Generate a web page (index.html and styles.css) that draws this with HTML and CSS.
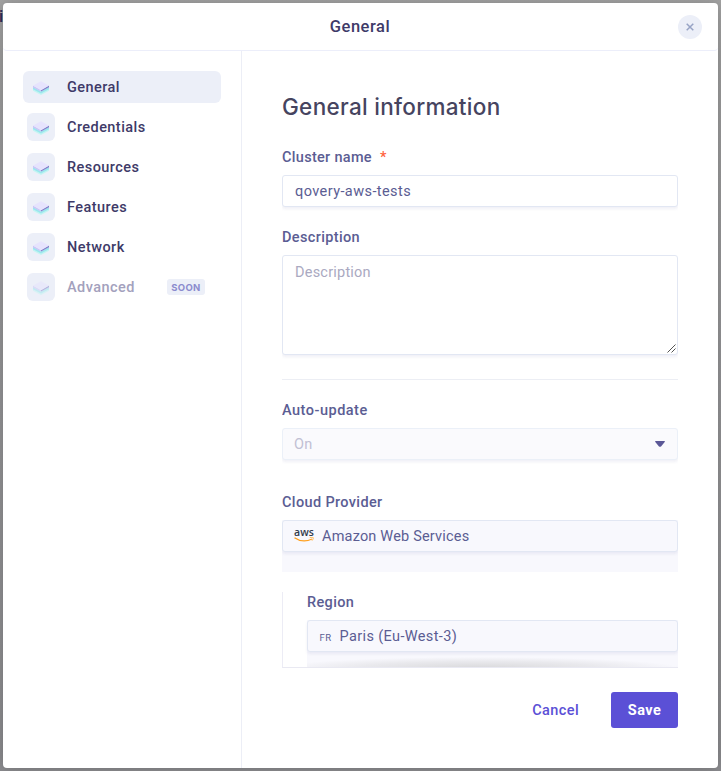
FILE: index.html
```html
<!DOCTYPE html>
<html lang="en">
<head>
<meta charset="utf-8">
<title>General</title>
<link rel="stylesheet" href="styles.css">
</head>
<body>
<svg width="0" height="0" class="defs" aria-hidden="true">
  <symbol id="layers" viewBox="0 0 16 14">
    <path d="M0 7.200 8 11l8-3.800v2.600L8 14 0 9.800z" fill="#c3f5f2"/>
    <path d="M0 6 8 10.500 16 6v2.200L8 12.500 0 8.200z" fill="#9be6ee"/>
    <path d="M0 4.800 8 9v1.600L0 6.500z" fill="#c9c4f7"/>
    <path d="M16 4.600 8 9v1.600l8-4.300z" fill="#8580cb"/>
    <path d="M8 0.300l8 4.300-8 4.600-8-4.600z" fill="#e6e3fd"/>
  </symbol>
</svg>
<span class="behind">i</span>
<div class="modal">
  <header class="header">
    <h2 class="title">General</h2>
    <button class="close" aria-label="Close"><svg width="8" height="8" viewBox="0 0 8 8"><path d="M.7.7l6.600 6.600M7.300.7L.7 7.300" stroke="#97a3c5" stroke-width="1.500"/></svg></button>
  </header>
  <div class="body">
    <nav class="nav">
      <a class="item active"><span class="tile"><svg><use href="#layers"/></svg></span><span>General</span></a>
      <a class="item"><span class="tile"><svg><use href="#layers"/></svg></span><span>Credentials</span></a>
      <a class="item"><span class="tile"><svg><use href="#layers"/></svg></span><span>Resources</span></a>
      <a class="item"><span class="tile"><svg><use href="#layers"/></svg></span><span>Features</span></a>
      <a class="item"><span class="tile"><svg><use href="#layers"/></svg></span><span>Network</span></a>
      <a class="item soon"><span class="tile"><svg><use href="#layers"/></svg></span><span>Advanced</span><span class="badge">SOON</span></a>
    </nav>
    <main class="main">
      <div class="content">
        <h1 class="heading">General information</h1>
        <div class="label cluster">Cluster name<span class="star">*</span></div>
        <div class="field value">qovery-aws-tests</div>
        <div class="label desc">Description</div>
        <div class="field area">Description<svg class="grip" width="9" height="9" viewBox="0 0 9 9"><path d="M.5 8.500l8-8M4.500 8.500l4-4" stroke="#555" stroke-width="1"/></svg></div>
        <div class="rule"></div>
        <div class="label auto">Auto-update</div>
        <div class="field select"><span>On</span><svg class="caret" width="10" height="6" viewBox="0 0 10 6"><path d="M.7 0h8.600q1 .2.400 1L6 5.400q-1 .9-2 0L.3 1Q-.3.200.7 0z" fill="#5b5897"/></svg></div>
        <div class="label cloud">Cloud Provider</div>
        <div class="shade">
          <div class="field locked"><span class="aws"><span class="aws-name">aws</span><svg width="20" height="5" viewBox="0 0 20 5"><path d="M.5.700c5.500 3.800 12 4 17.500 1.300" fill="none" stroke="#ff9f1c" stroke-width="1.300"/><path d="M15.800.6c1.700-.4 3.500-.3 3.500.1s-.3 2-1.300 3" fill="none" stroke="#ffb54c" stroke-width=".9"/></svg></span><span class="name">Amazon Web Services</span></div>
        </div>
        <div class="region">
          <div class="label reg">Region</div>
          <div class="shade">
            <div class="field locked"><span class="fr">FR</span><span class="paris">Paris (Eu-West-3)</span></div>
          </div>
        </div>
      </div>
      <footer class="footer">
        <button class="cancel">Cancel</button>
        <button class="save">Save</button>
      </footer>
    </main>
  </div>
</div>
</body>
</html>
```
FILE: styles.css
```css
* { box-sizing: border-box; }
body {
  margin: 0;
  height: 771px;
  padding: 3px;
  overflow: hidden;
  background: linear-gradient(#a4a4a4 0, #9c9c9c 60px, #949496 350px, #8b8b8e 100%);
  font-family: Roboto, "Liberation Sans", sans-serif;
  color: #5b5d93;
}
.defs { position: absolute; }
.behind { position: absolute; left: -1px; top: 7px; font: 500 17px/18px Roboto, sans-serif; color: #2f2b55; }
h1, h2 { margin: 0; font-weight: 500; }
button { font: inherit; border: 0; padding: 0; letter-spacing: inherit; }
.modal {
  position: relative;
  width: 715px;
  height: 765px;
  background: #fff;
  border-radius: 4px;
  box-shadow: 0 0 14px rgba(0, 0, 0, .2);
  display: flex;
  flex-direction: column;
}
.header {
  height: 48px;
  display: grid;
  grid-template-columns: 1fr auto 1fr;
  align-items: center;
  border-bottom: 1px solid #eceefa;
  border-radius: 4px;
  padding-right: 16px;
}
.title { grid-column: 2; margin-left: 15px; font-size: 16.500px; line-height: 24px; color: #3e3a68; letter-spacing: .55px; }
.close {
  justify-self: end;
  width: 24px;
  height: 24px;
  border-radius: 50%;
  background: #eceff8;
  display: flex;
  align-items: center;
  justify-content: center;
}
.body { flex: 1; display: flex; min-height: 0; }
.nav {
  width: 239px;
  padding: 20px;
  border-right: 1px solid #eceef6;
  display: flex;
  flex-direction: column;
  gap: 8px;
}
.item {
  width: 198px;
  height: 32px;
  padding: 0 16px 0 4px;
  border-radius: 6px;
  display: flex;
  align-items: center;
  font-size: 14.500px;
  font-weight: 500;
  letter-spacing: .44px;
  color: #3e3a68;
}
.active { background: #eceff8; }
.tile {
  width: 28px;
  height: 28px;
  margin-right: 12px;
  border-radius: 6px;
  background: #eceff8;
  display: flex;
  align-items: center;
  justify-content: center;
}
.tile svg { width: 16px; height: 14px; margin-top: 2px; }
.soon { color: #a3a1bd; }
.soon svg { opacity: .5; }
.badge {
  margin-left: auto;
  width: 38px;
  height: 16px;
  border-radius: 3px;
  background: #eceff8;
  color: #8b8bce;
  font: 700 9.500px/17px Inter, sans-serif;
  letter-spacing: .3px;
  text-align: center;
}
.main { flex: 1; padding: 0 40px; display: flex; flex-direction: column; }
.content { height: 617px; overflow: hidden; }
.heading {
  margin-top: 40px;
  font-family: Inter, sans-serif;
  font-size: 22.500px;
  letter-spacing: .3px;
  line-height: 32px;
  color: #46445f;
}
.label { font-size: 14.500px; font-weight: 500; line-height: 20px; letter-spacing: .36px; }
.cluster { margin-top: 25px; margin-bottom: 7px; letter-spacing: .3px; }
.star { margin-left: 8px; color: #ff6240; }
.field {
  height: 32px;
  padding: 1px 12px 0;
  border: 1px solid #e2e7f3;
  border-radius: 3px;
  background: #fff;
  box-shadow: 0 2px 3px rgba(90, 90, 150, .09);
  font-size: 14.500px;
  letter-spacing: .22px;
  line-height: 30px;
}
.value { letter-spacing: .42px; }
.desc { margin-top: 21px; margin-bottom: 7px; }
.area { height: 100px; color: #aaa9c1; position: relative; line-height: 32px; }
.grip { position: absolute; right: 1px; bottom: 1px; }
.rule { margin-top: 24px; height: 1px; background: #eceef4; }
.auto { margin-top: 21px; margin-bottom: 7px; letter-spacing: .5px; }
.select {
  display: flex;
  align-items: center;
  justify-content: space-between;
  padding-left: 11px;
  background: #fafafd;
  border-color: #ebf0f8;
  color: #c1c0d4;
}
.caret { margin-bottom: 1px; }
.cloud { margin-top: 33px; margin-bottom: 7px; }
.shade { background: #f8f8fd; height: 52px; }
.locked { background: #f8f8fd; display: flex; align-items: center; padding-left: 11px; }
.aws { width: 20px; margin-right: 8px; margin-top: -3px; display: flex; flex-direction: column; align-items: center; }
.aws-name { font: 600 10.500px/9px "Open Sans", sans-serif; letter-spacing: 0; color: #303b4c; }
.name { letter-spacing: .19px; }
.fr { margin-left: .5px; margin-right: 8px; font-size: 9.500px; letter-spacing: .5px; padding-top: 2px; }
.paris { letter-spacing: .36px; }
.region { margin-top: 20px; height: 76px; padding-left: 24px; border-left: 1px solid #ececf5; border-bottom: 1px solid #e9e9f2; overflow: hidden; }
.reg { padding-top: 1px; margin-bottom: 7px; }
.region .shade { background: radial-gradient(ellipse 200px 11px at 173px 48px, #d9d9db, #e9e9ed 60%, #f8f8fd); }
.footer { padding-top: 24px; display: flex; justify-content: flex-end; gap: 32px; font-weight: 500; font-size: 14.500px; letter-spacing: .4px; }
.cancel { background: none; color: #5b50d6; }
.save { width: 67px; height: 36px; border-radius: 3px; background: #5b50d6; color: #fff; font-weight: 700; }
```
